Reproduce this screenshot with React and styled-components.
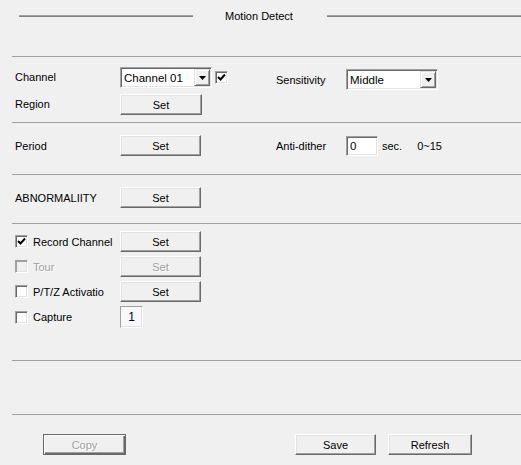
import React from 'react'
import styled, { createGlobalStyle } from 'styled-components'

const GlobalStyle = createGlobalStyle`
  html, body {
    margin: 0;
    padding: 0;
    background: #f0f0f0;
  }
  body {
    font-family: "Liberation Sans", Arial, sans-serif;
    font-size: 11px;
    color: #000;
  }
`

function Arrow() {
  return (
    <svg width="7" height="4" viewBox="0 0 7 4">
      <polygon points="0,0 7,0 3.5,4" fill="#000" />
    </svg>
  )
}

function Tick() {
  return (
    <svg width="9" height="9" viewBox="0 0 9 9">
      <polyline points="1,4 3.5,6.5 8,1.5" fill="none" stroke="#000" strokeWidth="2" />
    </svg>
  )
}

function Select({ value, width }) {
  return (
    <SelectBox $width={width}>
      <SelectText>{value}</SelectText>
      <ArrowButton>
        <Arrow />
      </ArrowButton>
    </SelectBox>
  )
}

function Check({ checked, disabled }) {
  return <CheckBox $disabled={disabled}>{checked && <Tick />}</CheckBox>
}

function App() {
  return (
    <Page>
      <GlobalStyle />
      <Header>
        <HeadLine $width={174} />
        <Title>Motion Detect</Title>
        <HeadLine $width={194} />
      </Header>

      <Divider $top={24} />

      <Section $top={9} $bottom={7}>
        <Row>
          <Label $drop={-1}>Channel</Label>
          <Cell>
            <Select value="Channel 01" width={92} />
            <Check checked />
          </Cell>
          <Label $drop={2}>Sensitivity</Label>
          <Cell $drop={2}>
            <Select value="Middle" width={92} />
          </Cell>
        </Row>
        <Row>
          <Label $drop={-1}>Region</Label>
          <Cell>
            <Button>Set</Button>
          </Cell>
        </Row>
      </Section>

      <Divider />

      <Section $top={12} $bottom={19}>
        <Row $height={20}>
          <Label>Period</Label>
          <Cell>
            <Button $width={81}>Set</Button>
          </Cell>
          <Label>Anti-dither</Label>
          <Cell>
            <TextInput>0</TextInput>
            <Unit>sec.</Unit>
            <Range>0~15</Range>
          </Cell>
        </Row>
      </Section>

      <Divider />

      <Section $top={12} $bottom={16}>
        <Row $height={20}>
          <Label>ABNORMALIITY</Label>
          <Cell>
            <Button $width={81}>Set</Button>
          </Cell>
        </Row>
      </Section>

      <Divider />

      <Section $top={7} $bottom={32} $gap={5}>
        <Row $height={20}>
          <Label>
            <Check checked />
            <CheckText>Record Channel</CheckText>
          </Label>
          <Cell>
            <Button $width={81}>Set</Button>
          </Cell>
        </Row>
        <Row $height={20}>
          <Label>
            <Check disabled />
            <CheckText $disabled>Tour</CheckText>
          </Label>
          <Cell>
            <Button $width={81} disabled>Set</Button>
          </Cell>
        </Row>
        <Row $height={20}>
          <Label>
            <Check />
            <CheckText>P/T/Z Activatio</CheckText>
          </Label>
          <Cell>
            <Button $width={81}>Set</Button>
          </Cell>
        </Row>
        <Row $height={22}>
          <Label>
            <Check />
            <CheckText>Capture</CheckText>
          </Label>
          <Cell>
            <CountBox>1</CountBox>
          </Cell>
        </Row>
      </Section>

      <Divider />

      <Blank />

      <Divider />

      <Footer>
        <Button $width={83} disabled $default>Copy</Button>
        <Button $width={81} $left={169}>Save</Button>
        <Button $width={84} $left={12}>Refresh</Button>
      </Footer>
    </Page>
  )
}

export default App

const Page = styled.div`
  width: 521px;
  height: 465px;
  overflow: hidden;
  background: #f0f0f0;
`

const Header = styled.div`
  display: flex;
  align-items: center;
  height: 32px;
  padding-left: 19px;
`

const HeadLine = styled.div`
  width: ${p => p.$width}px;
  height: 2px;
  background: #808080;
  border-top: 1px solid #a0a0a0;
  box-sizing: border-box;
`

const Title = styled.div`
  flex: 1;
  text-align: center;
  padding-right: 2px;
  margin-top: -1px;
`

const Divider = styled.div`
  margin-left: 12px;
  margin-top: ${p => p.$top || 0}px;
  height: 1px;
  background: #a0a0a0;
`

const Section = styled.div`
  display: flex;
  flex-direction: column;
  gap: ${p => p.$gap || 7}px;
  padding-top: ${p => p.$top}px;
  padding-bottom: ${p => p.$bottom}px;
`

const Blank = styled.div`
  height: 53px;
`

const Row = styled.div`
  display: grid;
  grid-template-columns: 105px 156px 70px auto;
  align-items: start;
  height: ${p => p.$height || 21}px;
  padding-left: 15px;
`

const Label = styled.div`
  display: flex;
  align-items: center;
  height: 100%;
  margin-top: ${p => p.$drop || 0}px;
  white-space: nowrap;
  overflow: hidden;
`

const Cell = styled.div`
  display: flex;
  align-items: center;
  height: 100%;
  margin-top: ${p => p.$drop || 0}px;
`

const Button = styled.div`
  box-sizing: border-box;
  width: ${p => p.$width || 82}px;
  height: 21px;
  margin-left: ${p => p.$left || 0}px;
  display: flex;
  align-items: center;
  justify-content: center;
  background: #f0f0f0;
  border: 1px solid;
  border-color: #ffffff #696969 #696969 #ffffff;
  box-shadow: inset -1px -1px 0 #a0a0a0, inset 1px 1px 0 #e3e3e3;
  color: ${p => (p.disabled ? '#a0a0a0' : '#000')};
  text-shadow: ${p => (p.disabled ? '1px 1px 0 #ffffff' : 'none')};
  ${p =>
    p.$default &&
    `
    border: 1px solid #696969;
    box-shadow: inset 1px 1px 0 #ffffff, inset -1px -1px 0 #696969, inset -2px -2px 0 #a0a0a0;
  `}
`

const SelectBox = styled.div`
  box-sizing: border-box;
  width: ${p => p.$width}px;
  height: 21px;
  display: flex;
  align-items: center;
  background: #ffffff;
  border: 1px solid;
  border-color: #a0a0a0 #ffffff #ffffff #a0a0a0;
  box-shadow: inset 1px 1px 0 #696969, inset -1px -1px 0 #e3e3e3;
  padding: 1px;
`

const SelectText = styled.div`
  flex: 1;
  padding-left: 2px;
  font-size: 11.5px;
  white-space: nowrap;
`

const ArrowButton = styled.div`
  box-sizing: border-box;
  width: 16px;
  height: 17px;
  display: flex;
  align-items: center;
  justify-content: center;
  background: #f0f0f0;
  border: 1px solid;
  border-color: #e3e3e3 #696969 #696969 #e3e3e3;
  box-shadow: inset 1px 1px 0 #ffffff, inset -1px -1px 0 #a0a0a0;
`

const CheckBox = styled.div`
  box-sizing: border-box;
  flex: none;
  width: 13px;
  height: 13px;
  margin-left: 3px;
  display: flex;
  align-items: center;
  justify-content: center;
  background: ${p => (p.$disabled ? '#f0f0f0' : '#ffffff')};
  border: 1px solid;
  border-color: #a0a0a0 #ffffff #ffffff #a0a0a0;
  box-shadow: inset 1px 1px 0 ${p => (p.$disabled ? '#a0a0a0' : '#696969')}, inset -1px -1px 0 #e3e3e3;

  ${Label} > & {
    margin-left: 0;
  }
`

const CheckText = styled.span`
  margin-left: 5px;
  color: ${p => (p.$disabled ? '#a0a0a0' : '#000')};
  text-shadow: ${p => (p.$disabled ? '1px 1px 0 #ffffff' : 'none')};
`

const TextInput = styled.div`
  box-sizing: border-box;
  width: 32px;
  height: 20px;
  display: flex;
  align-items: center;
  padding-left: 3px;
  font-size: 11.5px;
  background: #ffffff;
  border: 1px solid;
  border-color: #a0a0a0 #ffffff #ffffff #a0a0a0;
  box-shadow: inset 1px 1px 0 #696969, inset -1px -1px 0 #e3e3e3;
`

const Unit = styled.span`
  margin-left: 4px;
`

const Range = styled.span`
  margin-left: 15px;
`

const CountBox = styled.div`
  box-sizing: border-box;
  width: 23px;
  height: 22px;
  display: flex;
  align-items: center;
  justify-content: center;
  font-size: 12px;
  color: #000030;
  background: #f8f8f8;
  border: 1px solid;
  border-color: #a0a0a0 #ffffff #ffffff #a0a0a0;
  box-shadow: inset -1px -1px 0 #e3e3e3;
`

const Footer = styled.div`
  display: flex;
  padding-top: 19px;
  padding-left: 43px;
`
